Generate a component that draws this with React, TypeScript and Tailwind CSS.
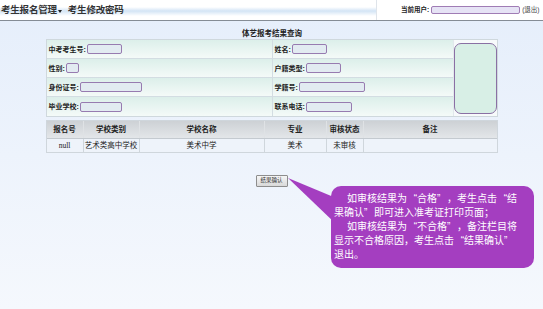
import React from "react";

const font = { fontFamily: '"Liberation Sans","Noto Sans CJK SC",sans-serif' };

function Field({ label, w }: { label: string; w: number }) {
  return (
    <div className="flex items-center pl-[2px] h-full">
      <span className="text-[7px] font-bold text-[#222] leading-none">{label}:</span>
      <span
        className="ml-[1px] h-[10px] rounded-[2px] border border-[#977bb0] bg-[#e2ebf1]"
        style={{ width: w }}
      />
    </div>
  );
}

function LQ() {
  return <span className="inline-block w-[10px] text-right">“</span>;
}
function RQ() {
  return <span className="inline-block w-[10px] text-left">”</span>;
}

const rowCls =
  "h-[19px] border-b border-[#d3dde2] bg-[linear-gradient(to_bottom,#dcefea,#f4faf8)]";

export default function App() {
  return (
    <div
      className="relative w-[543px] h-[309px] overflow-hidden flex flex-col bg-[linear-gradient(to_bottom,#e5eefb,#f5f8fd)]"
      style={font}
    >
      {/* header */}
      <div className="h-[21px] flex border-b border-[#858c95] bg-white shrink-0">
        <div className="w-[377px] flex items-center pl-[1px] border-r border-[#dfe4ea] bg-[linear-gradient(to_bottom,#ffffff_0%,#ffffff_35%,#d3e4f5_55%,#ffffff_80%)]">
          <span className="text-[9.5px] font-bold text-[#333] leading-none tracking-[-0.2px]">考生报名管理</span>
          <svg className="ml-[1px] mt-[3px]" width="4" height="3" viewBox="0 0 4 3">
            <polygon points="0,0 4,0 2,3" fill="#222" />
          </svg>
          <span className="text-[9.5px] font-bold text-[#333] leading-none ml-[6px] tracking-[-0.2px]">考生修改密码</span>
        </div>
        <div className="flex-1 flex items-center pl-[24px]">
          <span className="text-[6.5px] font-bold text-[#222] leading-none">当前用户:</span>
          <span className="ml-[2px] w-[89px] h-[8px] rounded-[2px] border border-[#a07cb5] bg-[#e6e3f5]" />
          <span className="ml-[2px] text-[6.5px] text-[#444] leading-none">(退出)</span>
        </div>
      </div>

      {/* content */}
      <div className="flex flex-col items-center">
        <div className="h-[18px] flex items-end pb-[2px] pl-[1px]">
          <span className="text-[7.5px] font-bold text-[#222] leading-none">体艺报考结果查询</span>
        </div>

        <div className="w-[452px] flex border border-[#cfd8dd] bg-white">
          <div className="w-[226px] border-r border-[#d3dde2]">
            <div className={rowCls}><Field label="中考考生号" w={35} /></div>
            <div className={rowCls}><Field label="性别" w={13} /></div>
            <div className={rowCls}><Field label="身份证号" w={62} /></div>
            <div className={rowCls + " border-b-0"}><Field label="毕业学校" w={42} /></div>
          </div>
          <div className="w-[181px] border-r border-[#e2e8ec]">
            <div className={rowCls}><Field label="姓名" w={35} /></div>
            <div className={rowCls}><Field label="户籍类型" w={35} /></div>
            <div className={rowCls}><Field label="学籍号" w={66} /></div>
            <div className={rowCls + " border-b-0"}><Field label="联系电话" w={46} /></div>
          </div>
          <div className="flex-1 flex items-center justify-center bg-[#f7fafb]">
            <div className="w-[43px] h-[71px] rounded-[7px] border border-[#8a70a4] bg-[#d8efe6]" />
          </div>
        </div>

        <div className="w-[452px] mt-[3px] border border-[#cfd6dc] text-[7.5px] leading-none">
          <div className="flex h-[18px] bg-[linear-gradient(to_bottom,#cdd1d5,#e3e6e9)] font-bold text-[#222] border-b border-[#c4cad0]">
            <div className="w-[36px] flex items-center justify-center">报名号</div>
            <div className="w-[56px] flex items-center justify-center border-l border-[#dfe2e5]">学校类别</div>
            <div className="w-[125px] flex items-center justify-center border-l border-[#dfe2e5]">学校名称</div>
            <div className="w-[62px] flex items-center justify-center border-l border-[#dfe2e5]">专业</div>
            <div className="w-[37px] flex items-center justify-center border-l border-[#dfe2e5]">审核状态</div>
            <div className="flex-1 flex items-center justify-center border-l border-[#dfe2e5]">备注</div>
          </div>
          <div className="flex h-[13px] bg-[#eef3fa] text-[#222]">
            <div className="w-[36px] flex items-center justify-center" style={{ fontFamily: '"Liberation Serif",serif' }}>null</div>
            <div className="w-[56px] flex items-center justify-center border-l border-[#cfd6dc]">艺术类高中学校</div>
            <div className="w-[125px] flex items-center justify-center border-l border-[#cfd6dc]">美术中学</div>
            <div className="w-[62px] flex items-center justify-center border-l border-[#cfd6dc]">美术</div>
            <div className="w-[37px] flex items-center justify-center border-l border-[#cfd6dc]">未审核</div>
            <div className="flex-1 border-l border-[#cfd6dc]" />
          </div>
        </div>

        <button className="mt-[22px] h-[12px] w-[32px] flex items-center justify-center border border-[#8d8d8d] rounded-[1px] bg-[linear-gradient(to_bottom,#f6f6f6,#d9d9d9)] text-[5.5px] text-[#333] leading-none">
          结果确认
        </button>
      </div>

      {/* callout */}
      <svg className="absolute left-0 top-0" width="543" height="309">
        <polygon points="288,178 336,198 336,224" fill="#a43ec0" />
      </svg>
      <div className="absolute left-[331px] top-[186px] w-[203px] h-[82px] rounded-[10px] bg-[#a43ec0] pl-[3px] pt-[6px] text-white text-[10px] leading-[14px]">
        <div className="whitespace-nowrap pl-[13px]">如审核结果为<LQ />合格<RQ />，考生点击<LQ />结</div>
        <div className="whitespace-nowrap">果确认<RQ />即可进入准考证打印页面；</div>
        <div className="whitespace-nowrap pl-[13px]">如审核结果为<LQ />不合格<RQ />，备注栏目将</div>
        <div className="whitespace-nowrap">显示不合格原因，考生点击<LQ />结果确认<RQ /></div>
        <div className="whitespace-nowrap">退出。</div>
      </div>
    </div>
  );
}
